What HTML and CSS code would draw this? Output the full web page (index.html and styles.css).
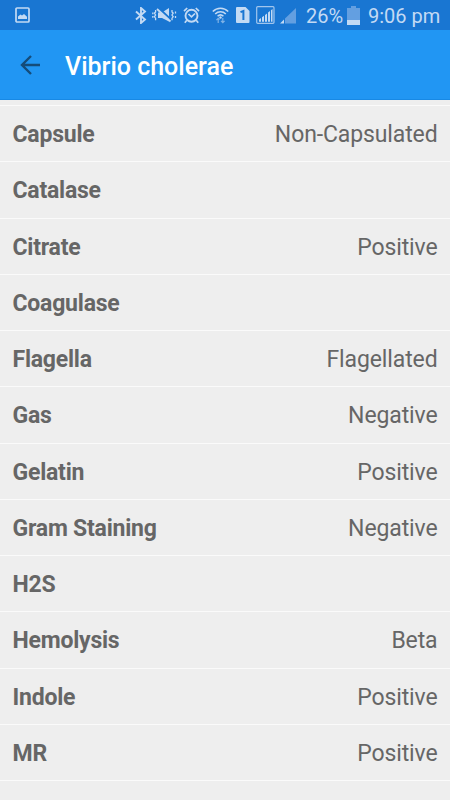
FILE: index.html
```html
<!DOCTYPE html>
<html lang="en">
<head>
<meta charset="utf-8">
<title>Vibrio cholerae</title>
<link rel="stylesheet" href="styles.css">
</head>
<body>
<div class="screen">
  <div class="status">
    <svg class="picture" width="15" height="16" viewBox="0 0 15 16"><rect x="1" y="1" width="13" height="14" rx="1" fill="none" stroke="currentColor" stroke-width="1.7"/><path d="M3 12V9.5L5.5 7.5 7 8.5 9 7l3 2.7V12z" fill="currentColor"/></svg>
    <svg class="bluetooth" width="12" height="17" viewBox="0 0 12 17"><path d="M1 4.5l9 8L6 16V1l4 3.5-9 8" fill="none" stroke="currentColor" stroke-width="1.9"/></svg>
    <svg class="vibrate" width="25" height="16" viewBox="0 0 25 16"><path d="M6 5.5h4L17 1v13.5L10 11H6z" fill="currentColor"/><path d="M6 .5l15 14" stroke="#1976d2" stroke-width="2.2"/><path d="M5 2l13.5 12.5" stroke="currentColor" stroke-width="1.8"/><path d="M3.6 3v2L2.4 6.2 3.6 8 2.4 9.8l1.2 1.4v2M.8 5.5v1.8M.8 9v1.8M20 3v2l1.2 1.2L20 8l1.2 1.8L20 11.2v2M23.5 4.5v2M23.5 9v2" fill="none" stroke="currentColor" stroke-width="1.3"/></svg>
    <svg class="alarm" width="17" height="17" viewBox="0 0 17 17"><g fill="none" stroke="currentColor" stroke-width="1.9"><circle cx="8.5" cy="8.8" r="6"/><path d="M1 4.2L4.2 1M12.8 1L16 4.2M3.8 13.2l-2 2.5M13.2 13.2l2 2.5M5.5 7l3 2.8L12 6.5" stroke-width="1.7"/></g></svg>
    <svg class="wifi" width="17" height="17" viewBox="0 0 17 17"><g fill="none" stroke="currentColor"><path d="M.8 4.5C5 .1 12 .1 16.2 4.5M3.2 7c3-3 7.6-3 10.6 0M5.6 9.3c1.7-1.7 4.1-1.7 5.8 0" stroke-width="1.6"/><path d="M6.2 16v-4.5M4.4 13.2l1.8-1.8 1.3 1.3M10.8 11v4.5M9 13.8l1.8 1.8 1.8-1.8" stroke-width="1.2" opacity=".6"/></g><circle cx="8.5" cy="10.5" r="1.2" fill="currentColor"/></svg>
    <svg class="sim" width="14" height="16" viewBox="0 0 14 16"><path d="M0 1q0-1 1-1h8.5L13.5 4v11q0 1-1 1H1q-1 0-1-1z" fill="currentColor"/><path d="M4.5 5.2L7.4 4v9" fill="none" stroke="#1976d2" stroke-width="2"/></svg>
    <svg class="signal-box" width="19" height="18" viewBox="0 0 19 18"><rect x=".7" y=".7" width="17.3" height="16.6" rx="1" fill="none" stroke="currentColor" stroke-width="1.2" opacity=".8"/><path d="M3 15.7v-2.2l2-1.5v3.7zM6 15.7v-4.5l2-1.5v6zM9 15.7V9l2-1.6v8.3zM12 15.7V6.5L14 5v10.7zM15 15.7V4.2l1.5-1.2v12.7z" fill="currentColor"/></svg>
    <svg class="signal" width="17" height="17" viewBox="0 0 17 17"><path d="M16 1v15.5H5v-5z" fill="#639fe1"/><path d="M0 16.5L4 12.5v4z" fill="currentColor"/></svg>
    <span class="percent">26%</span>
    <svg class="battery" width="13" height="19" viewBox="0 0 13 19"><path d="M0 2h4V0h5v2h4v12H0z" fill="#639fe1"/><path d="M0 14h13v5H0z" fill="currentColor"/></svg>
    <span class="time">9:06 pm</span>
  </div>
  <header class="appbar">
    <svg class="back" width="20" height="20" viewBox="0 0 20 20"><path d="M20 10H2M11 1L2 10l9 9" fill="none" stroke="#154c79" stroke-width="2.4"/></svg>
    <h1>Vibrio cholerae</h1>
  </header>
  <main class="list">
    <div class="row"><b>Capsule</b><span>Non-Capsulated</span></div>
    <div class="row"><b>Catalase</b></div>
    <div class="row"><b>Citrate</b><span>Positive</span></div>
    <div class="row"><b>Coagulase</b></div>
    <div class="row"><b>Flagella</b><span>Flagellated</span></div>
    <div class="row"><b>Gas</b><span>Negative</span></div>
    <div class="row"><b>Gelatin</b><span>Positive</span></div>
    <div class="row"><b>Gram Staining</b><span>Negative</span></div>
    <div class="row"><b>H2S</b></div>
    <div class="row"><b>Hemolysis</b><span>Beta</span></div>
    <div class="row"><b>Indole</b><span>Positive</span></div>
    <div class="row"><b>MR</b><span>Positive</span></div>
    <div class="row"></div>
  </main>
</div>
</body>
</html>
```
FILE: styles.css
```css
* { box-sizing: border-box; }
body { margin: 0; font-family: Roboto, "Liberation Sans", sans-serif; background: #eee; }
.screen { width: 450px; height: 800px; overflow: hidden; }
.status {
  height: 30px;
  display: flex;
  align-items: center;
  background: #1976d2;
  color: #c3daf4;
  font-size: 20px;
  white-space: nowrap;
}
.status svg { flex: none; }
.picture { margin-left: 15px; }
.bluetooth { margin-left: 105px; }
.vibrate { margin-left: 5px; }
.alarm { margin-left: 6px; }
.wifi { margin-left: 12px; }
.sim { margin-left: 7px; }
.signal-box { margin-left: 6px; }
.signal { margin-left: 5px; }
.percent { width: 41px; margin-left: 9px; padding-top: 2px; }
.time { margin-left: 8px; padding-top: 2px; }
.appbar {
  height: 70px;
  display: flex;
  align-items: center;
  padding-left: 20px;
  background: #2196f3;
  border-bottom: 1px solid #1889e5;
}
.back { margin-right: 25px; }
h1 { margin: 4px 0 0; font-size: 25px; font-weight: 500; color: #fff; white-space: nowrap; }
.list { padding-top: 5px; }
.row {
  height: 56.25px;
  padding: 2px 12.5px 0;
  display: flex;
  align-items: center;
  justify-content: space-between;
  border-top: 1px solid #fafafa;
  font-size: 23px;
  letter-spacing: -0.12px;
  color: #666;
}
.row b { font-weight: 700; letter-spacing: -0.22px; }
```
